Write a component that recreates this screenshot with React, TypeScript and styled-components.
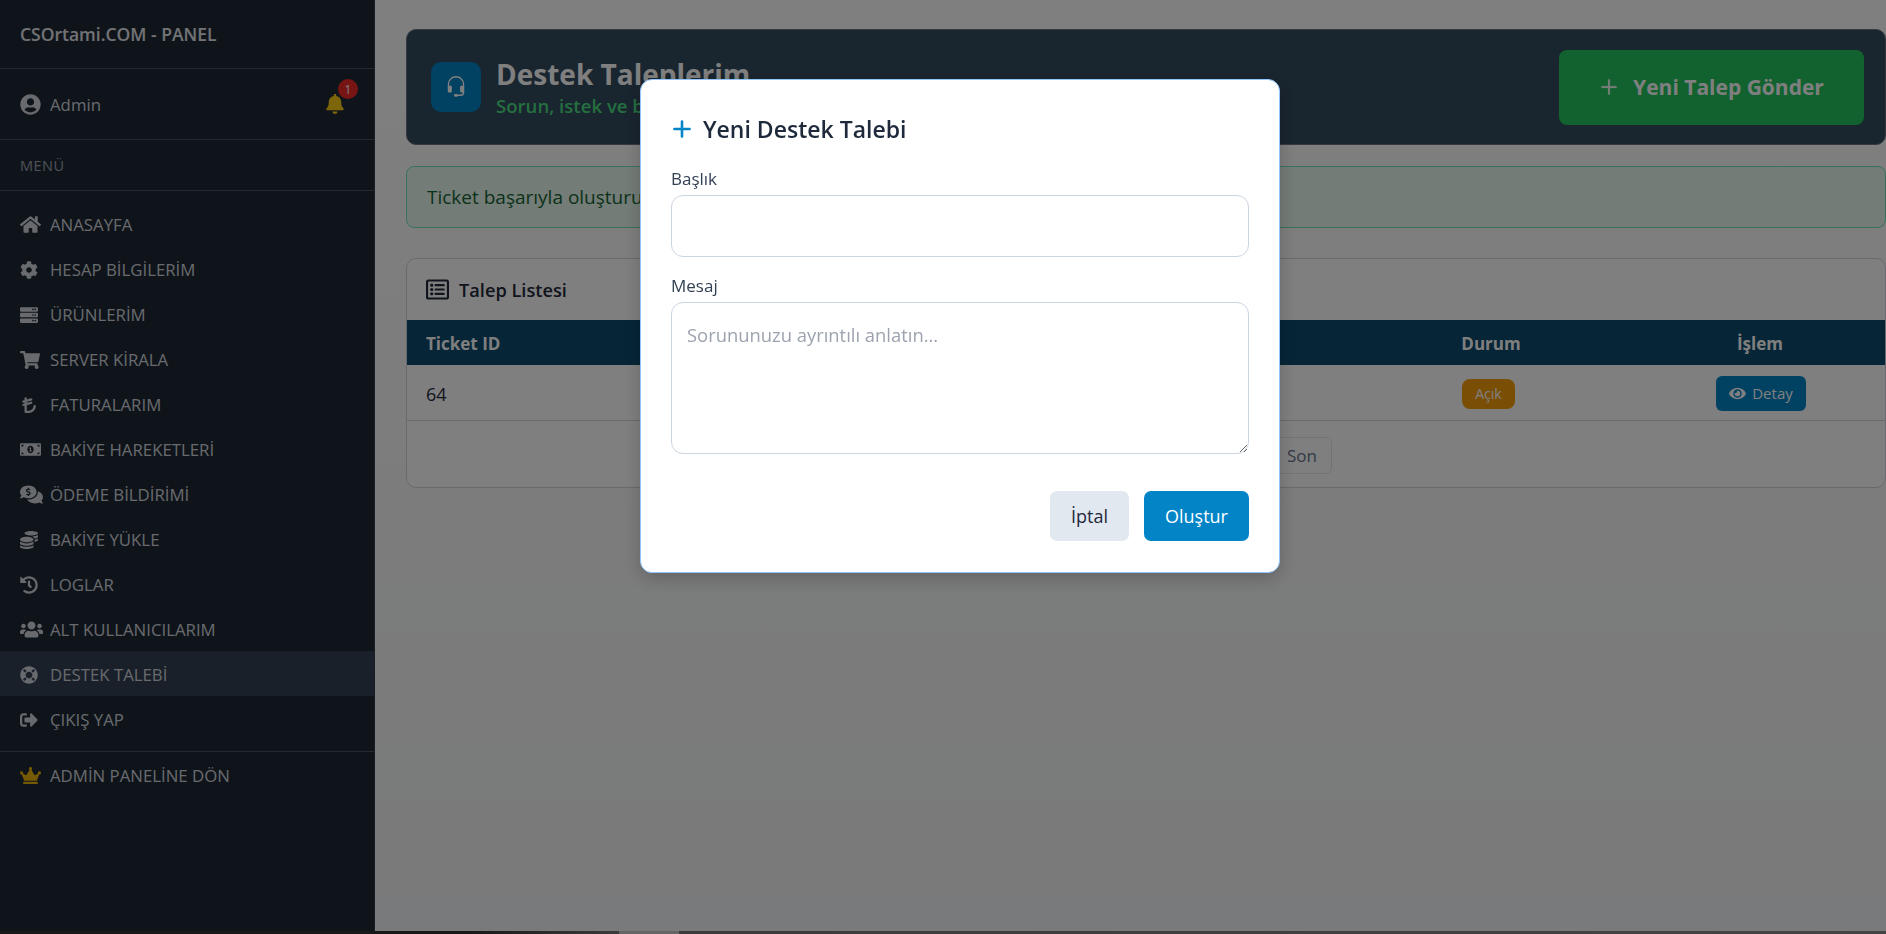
import React from "react";
import styled, { createGlobalStyle } from "styled-components";
import {
  FaHome, FaCog, FaServer, FaShoppingCart, FaMoneyBillAlt, FaCommentsDollar, FaCoins,
  FaHistory, FaUsers, FaLifeRing, FaSignOutAlt, FaCrown, FaBell, FaUserCircle, FaEye, FaRegListAlt,
} from "react-icons/fa";
import { FaTurkishLiraSign } from "react-icons/fa6";
import { BsHeadset, BsPlusLg } from "react-icons/bs";

const Global = createGlobalStyle`
  html, body { margin: 0; padding: 0; height: 100%; overflow: hidden; background: #f9fafb; }
  * { box-sizing: border-box; }
  body { font-family: "Open Sans", "Noto Sans", sans-serif; color: #1e293b; }
`;

const Shell = styled.div`
  height: 934px;
  display: flex;
  flex-direction: column;
`;
const Body = styled.div`
  flex: 1;
  min-height: 0;
  display: flex;
  background: linear-gradient(180deg, #ffffff 0%, #f3f4f6 100%);
`;
const BottomStrip = styled.div`
  height: 3px;
  flex: none;
  background: linear-gradient(90deg, #333333 0%, #333333 25%, #777777 32.8%, #cccccc 32.8% 36%, #777777 36%, #888888 100%);
`;
const Sidebar = styled.aside`
  width: 375px;
  flex: none;
  background: #1f2937;
  border-right: 1px solid #374151;
  color: #d1d5db;
  font-size: 16.8px;
`;
const Brand = styled.div`
  height: 69px;
  padding: 0 20px;
  display: flex;
  align-items: center;
  border-bottom: 1px solid #4b5563;
  font-size: 17.5px;
  font-weight: 600;
  color: #e5e7eb;
`;
const UserRow = styled.div`
  height: 71px;
  padding: 0 20px;
  display: flex;
  align-items: center;
  justify-content: space-between;
  border-bottom: 1px solid #4b5563;
`;
const UserName = styled.div`
  display: flex;
  align-items: center;
`;
const Slot = styled.span<{ $color?: string }>`
  width: 30px;
  flex: none;
  display: flex;
  align-items: center;
  color: ${(p) => p.$color ?? "inherit"};
`;
const BellWrap = styled.span`
  position: relative;
  display: flex;
  margin-right: 9px;
  color: #facc15;
`;
const BellBadge = styled.span`
  position: absolute;
  top: -15px;
  left: 13px;
  width: 20px;
  height: 20px;
  border-radius: 50%;
  background: #ef2929;
  color: #fff;
  font-size: 12px;
  display: flex;
  align-items: center;
  justify-content: center;
`;
const MenuLabel = styled.div`
  height: 51px;
  padding: 0 20px;
  display: flex;
  align-items: center;
  border-bottom: 1px solid #4b5563;
  font-size: 14.5px;
  letter-spacing: 0.5px;
  color: #9ca3af;
`;
const Nav = styled.nav<{ $bordered?: boolean }>`
  padding: ${(p) => (p.$bordered ? "0" : "10px 0")};
  border-bottom: ${(p) => (p.$bordered ? "none" : "1px solid #4b5563")};
`;
const NavItem = styled.a<{ $active?: boolean }>`
  height: 45px;
  padding: 2px 20px 0;
  display: flex;
  align-items: center;
  background: ${(p) => (p.$active ? "#334155" : "transparent")};
  color: #d1d5db;
`;
const Main = styled.main`
  flex: 1;
  min-width: 0;
  padding: 29px 0 0 31px;
  display: flex;
  flex-direction: column;
`;
const Hero = styled.header`
  height: 116px;
  flex: none;
  background: #334a5e;
  border: 1px solid #6b7280;
  border-radius: 10px;
  padding: 0 21px 0 24px;
  display: flex;
  align-items: center;
  justify-content: space-between;
`;
const HeroLeft = styled.div`
  display: flex;
  align-items: center;
  gap: 15px;
`;
const Tile = styled.div`
  width: 50px;
  height: 50px;
  border-radius: 10px;
  background: #0284c7;
  color: #fff;
  display: flex;
  align-items: center;
  justify-content: center;
  font-size: 22px;
`;
const HeroTitle = styled.h1`
  margin: 0;
  font-size: 28px;
  line-height: 36px;
  font-weight: 700;
  color: #fff;
`;
const HeroSub = styled.p`
  margin: 1px 0 0;
  font-size: 18.6px;
  line-height: 26px;
  font-weight: 600;
  color: #4ade80;
`;
const HeroButton = styled.button`
  width: 305px;
  height: 75px;
  border: 0;
  border-radius: 8px;
  background: #22c55e;
  color: #fff;
  font: 700 21px "Open Sans", sans-serif;
  display: flex;
  align-items: center;
  justify-content: center;
  gap: 14px;
`;
const Alert = styled.div`
  height: 62px;
  flex: none;
  margin-top: 21px;
  padding: 0 20px;
  display: flex;
  align-items: center;
  background: #e8f8ee;
  border: 1px solid #6ee7b7;
  border-radius: 8px;
  font-size: 19px;
  color: #166534;
`;
const Card = styled.section`
  height: 230px;
  flex: none;
  margin-top: 30px;
  background: #ffffff;
  border: 1px solid #d1d5db;
  border-radius: 10px;
  overflow: hidden;
`;
const CardTitle = styled.div`
  height: 61px;
  padding: 0 19px;
  display: flex;
  align-items: center;
  gap: 10px;
  font-size: 18.2px;
  font-weight: 600;
`;
const Table = styled.table`
  width: 100%;
  border-collapse: collapse;
  table-layout: fixed;
`;
const Th = styled.th<{ $center?: boolean }>`
  height: 45px;
  padding: 2px 19px 0;
  background: #0c4a6e;
  color: #fff;
  font-size: 17px;
  font-weight: 700;
  text-align: ${(p) => (p.$center ? "center" : "left")};
`;
const Td = styled.td<{ $center?: boolean }>`
  height: 55px;
  padding: 3px 19px 0;
  font-size: 18px;
  border-bottom: 1px solid #d1d5db;
  text-align: ${(p) => (p.$center ? "center" : "left")};
`;
const Badge = styled.span`
  display: inline-flex;
  align-items: center;
  justify-content: center;
  width: 53px;
  height: 30px;
  margin-right: 5px;
  background: #f59e0b;
  border-radius: 8px;
  color: #fff;
  font-size: 14px;
`;
const DetailButton = styled.button`
  width: 90px;
  height: 35px;
  margin: -1px 0 0 2px;
  border: 0;
  border-radius: 6px;
  background: #0284c7;
  color: #fff;
  font: 400 15px "Open Sans", sans-serif;
  display: inline-flex;
  align-items: center;
  justify-content: center;
  gap: 6px;
  vertical-align: middle;
`;
const Pager = styled.div`
  height: 68px;
  padding: 16px 0 0 864px;
  display: flex;
  justify-content: flex-start;
`;
const PageButton = styled.span`
  width: 61px;
  height: 37px;
  border: 1px solid #e5e7eb;
  border-radius: 6px;
  color: #64748b;
  font-size: 17px;
  display: flex;
  align-items: center;
  justify-content: flex-end;
  padding-right: 14px;
`;
const Overlay = styled.div`
  position: fixed;
  inset: 0;
  background: rgba(0, 0, 0, 0.5);
  padding: 79px 0 0 640px;
`;
const Modal = styled.form`
  width: 640px;
  height: 494px;
  background: #fff;
  border: 1px solid #93c5fd;
  border-radius: 12px;
  box-shadow: 0 6px 18px rgba(0, 0, 0, 0.2);
  padding: 30px 30px 0;
`;
const ModalTitle = styled.h2`
  margin: 0;
  height: 38px;
  display: flex;
  align-items: center;
  gap: 10px;
  font-size: 23px;
  font-weight: 600;
  color: #1e293b;
`;
const PlusMark = styled.span`
  color: #0284c7;
  display: flex;
`;
const Label = styled.label`
  display: block;
  font-size: 17px;
  line-height: 24px;
  color: #334155;
`;
const TitleLabel = styled(Label)`
  margin-top: 19px;
  margin-bottom: 4px;
`;
const MessageLabel = styled(Label)`
  margin-top: 17px;
  margin-bottom: 4px;
`;
const Input = styled.input`
  display: block;
  width: 100%;
  height: 62px;
  border: 1px solid #cbd5e1;
  border-radius: 12px;
  background: #fff;
  outline: none;
`;
const Textarea = styled.textarea`
  display: block;
  width: 100%;
  height: 152px;
  padding: 19px 15px;
  border: 1px solid #cbd5e1;
  border-radius: 12px;
  outline: none;
  resize: vertical;
  font: 400 18.4px/26px "Open Sans", sans-serif;
  &::placeholder { color: #9ca3af; }
`;
const Actions = styled.div`
  margin-top: 37px;
  display: flex;
  justify-content: flex-end;
  gap: 15px;
`;
const ActionButton = styled.button<{ $primary?: boolean }>`
  height: 50px;
  padding: 0;
  width: ${(p) => (p.$primary ? "105px" : "79px")};
  border: 0;
  border-radius: 7px;
  background: ${(p) => (p.$primary ? "#0284c7" : "#e2e8f0")};
  color: ${(p) => (p.$primary ? "#fff" : "#1e293b")};
  font: 400 18px "Open Sans", sans-serif;
`;

const items: [React.ReactNode, string][] = [
  [<FaHome size={21} />, "ANASAYFA"],
  [<FaCog size={18} />, "HESAP BİLGİLERİM"],
  [<FaServer size={18} />, "ÜRÜNLERİM"],
  [<FaShoppingCart size={20} />, "SERVER KİRALA"],
  [<FaTurkishLiraSign size={18} />, "FATURALARIM"],
  [<FaMoneyBillAlt size={21} />, "BAKİYE HAREKETLERİ"],
  [<FaCommentsDollar size={23} />, "ÖDEME BİLDİRİMİ"],
  [<FaCoins size={18} />, "BAKİYE YÜKLE"],
  [<FaHistory size={18} />, "LOGLAR"],
  [<FaUsers size={23} />, "ALT KULLANICILARIM"],
  [<FaLifeRing size={18} />, "DESTEK TALEBİ"],
  [<FaSignOutAlt size={18} />, "ÇIKIŞ YAP"],
];

export default function App() {
  return (
    <Shell>
      <Global />
      <Body>
        <Sidebar>
          <Brand>CSOrtami.COM - PANEL</Brand>
          <UserRow>
            <UserName>
              <Slot><FaUserCircle size={21} /></Slot>
              Admin
            </UserName>
            <BellWrap>
              <FaBell size={20} />
              <BellBadge>1</BellBadge>
            </BellWrap>
          </UserRow>
          <MenuLabel>MENÜ</MenuLabel>
          <Nav>
            {items.map(([icon, label]) => (
              <NavItem key={label} $active={label === "DESTEK TALEBİ"}>
                <Slot>{icon}</Slot>
                {label}
              </NavItem>
            ))}
          </Nav>
          <Nav $bordered>
            <NavItem>
              <Slot $color="#eab308"><FaCrown size={21} /></Slot>
              ADMİN PANELİNE DÖN
            </NavItem>
          </Nav>
        </Sidebar>
        <Main>
          <Hero>
            <HeroLeft>
              <Tile><BsHeadset /></Tile>
              <div>
                <HeroTitle>Destek Taleplerim</HeroTitle>
                <HeroSub>Sorun, istek ve bildirimlerinizi buradan yönetin</HeroSub>
              </div>
            </HeroLeft>
            <HeroButton type="button"><BsPlusLg size={20} stroke="currentColor" strokeWidth={0.6} />Yeni Talep Gönder</HeroButton>
          </Hero>
          <Alert>Ticket başarıyla oluşturuldu.</Alert>
          <Card>
            <CardTitle><FaRegListAlt size={23} />Talep Listesi</CardTitle>
            <Table>
              <colgroup>
                <col />
                <col width="288" />
                <col width="250" />
              </colgroup>
              <thead>
                <tr>
                  <Th>Ticket ID</Th>
                  <Th $center>Durum</Th>
                  <Th $center>İşlem</Th>
                </tr>
              </thead>
              <tbody>
                <tr>
                  <Td>64</Td>
                  <Td $center><Badge>Açık</Badge></Td>
                  <Td $center><DetailButton type="button"><FaEye size={17} />Detay</DetailButton></Td>
                </tr>
              </tbody>
            </Table>
            <Pager><PageButton>Son</PageButton></Pager>
          </Card>
        </Main>
      </Body>
      <BottomStrip />
      <Overlay>
        <Modal>
          <ModalTitle>
            <PlusMark><BsPlusLg size={22} stroke="currentColor" strokeWidth={0.9} /></PlusMark>
            Yeni Destek Talebi
          </ModalTitle>
          <TitleLabel>Başlık</TitleLabel>
          <Input />
          <MessageLabel>Mesaj</MessageLabel>
          <Textarea placeholder="Sorununuzu ayrıntılı anlatın..." />
          <Actions>
            <ActionButton type="button">İptal</ActionButton>
            <ActionButton type="button" $primary>Oluştur</ActionButton>
          </Actions>
        </Modal>
      </Overlay>
    </Shell>
  );
}
